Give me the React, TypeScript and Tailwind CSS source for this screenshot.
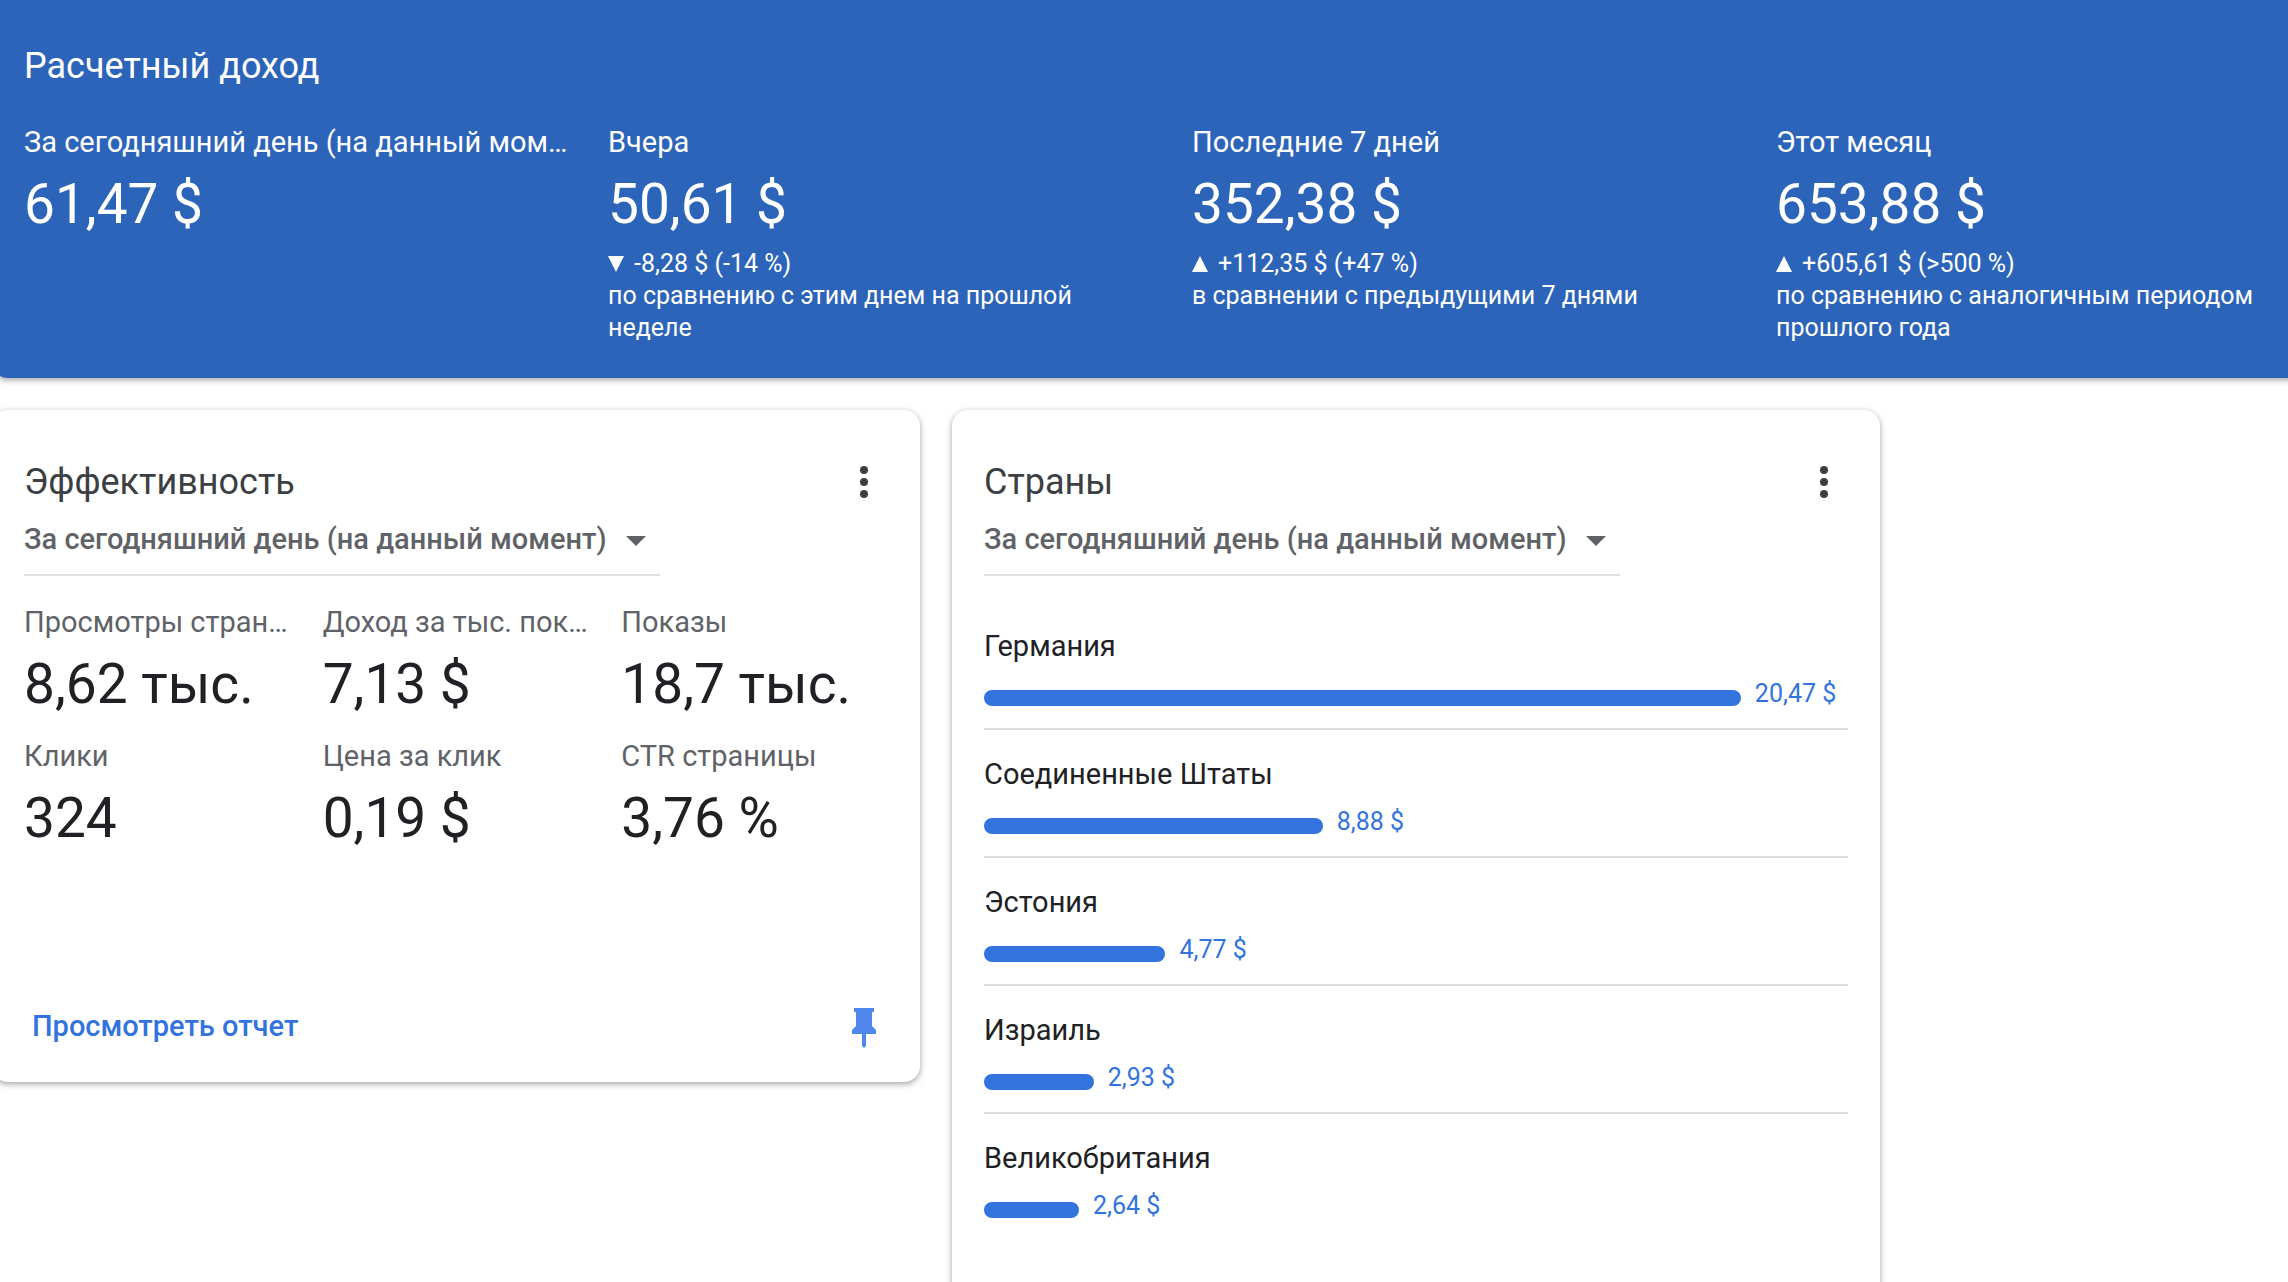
import { ReactNode } from "react";
import clsx from "clsx";

const income = [
  { label: "За сегодняшний день (на данный момент)", value: "61,47 $" },
  {
    label: "Вчера",
    value: "50,61 $",
    trend: "down",
    change: "-8,28 $ (-14 %)",
    note: "по сравнению с этим днем на прошлой неделе",
  },
  {
    label: "Последние 7 дней",
    value: "352,38 $",
    trend: "up",
    change: "+112,35 $ (+47 %)",
    note: "в сравнении с предыдущими 7 днями",
  },
  {
    label: "Этот месяц",
    value: "653,88 $",
    trend: "up",
    change: "+605,61 $ (>500 %)",
    note: "по сравнению с аналогичным периодом прошлого года",
  },
];

const metrics = [
  { label: "Просмотры страниц", value: "8,62 тыс." },
  { label: "Доход за тыс. показов", value: "7,13 $" },
  { label: "Показы", value: "18,7 тыс." },
  { label: "Клики", value: "324" },
  { label: "Цена за клик", value: "0,19 $" },
  { label: "CTR страницы", value: "3,76 %" },
];

// share is the bar width in percent of the row
const countries = [
  { name: "Германия", value: "20,47 $", share: 87.6 },
  { name: "Соединенные Штаты", value: "8,88 $", share: 39.2 },
  { name: "Эстония", value: "4,77 $", share: 21 },
  { name: "Израиль", value: "2,93 $", share: 12.7 },
  { name: "Великобритания", value: "2,64 $", share: 11 },
];

const shadow =
  "shadow-[0_2px_4px_0_rgba(60,64,67,0.3),0_2px_6px_2px_rgba(60,64,67,0.15)]";

const Trend = ({ up }: { up: boolean }) => (
  <svg viewBox="0 0 16 16" className="mr-2.5 inline-block h-4 w-4 align-baseline" fill="currentColor">
    <path d={up ? "M8 0L16 16H0Z" : "M0 0H16L8 16Z"} />
  </svg>
);

const MoreIcon = () => (
  <svg viewBox="0 0 24 24" className="h-12 w-12" fill="currentColor">
    <circle cx="12" cy="6" r="2" />
    <circle cx="12" cy="12" r="2" />
    <circle cx="12" cy="18" r="2" />
  </svg>
);

const PinIcon = () => (
  <svg viewBox="0 0 24 40" className="h-10 w-6" fill="currentColor">
    <path d="M2 0H22V4H20V18L24 22V26H14V38L12 40L10 38V26H0V22L4 18V4H2Z" />
  </svg>
);

const PeriodSelect = ({ id }: { id: string }) => (
  <div className="relative w-[636px] max-w-full text-[#5f6368]">
    <select
      id={id}
      aria-label="Период"
      className="block h-[70px] w-full appearance-none border-b-2 border-[#e0e0e0] bg-transparent text-[29px] font-medium outline-none"
    >
      <option>За сегодняшний день (на данный момент)</option>
    </select>
    <svg
      viewBox="0 0 20 10"
      className="pointer-events-none absolute top-[30px] right-3.5 h-2.5 w-5"
      fill="currentColor"
    >
      <path d="M0 0H20L10 10Z" />
    </svg>
  </div>
);

const Card = ({ id, title, children }: { id: string; title: string; children: ReactNode }) => (
  <section className={clsx("w-[928px] rounded-2xl bg-white px-8 pt-12", shadow)}>
    <div className="flex items-center justify-between text-[#3c4043]">
      <h2 className="text-4xl leading-12">{title}</h2>
      <button type="button" aria-label="Меню">
        <MoreIcon />
      </button>
    </div>
    <PeriodSelect id={id} />
    {children}
  </section>
);

const App = () => {
  return (
    <main className="h-screen overflow-hidden bg-white font-[Roboto,sans-serif] text-[#202124]">
      <header
        className={clsx(
          "-mr-18 -ml-2 rounded-b-2xl bg-[#2c64b9] px-8 pt-[42px] pb-[34px] text-white",
          shadow
        )}
      >
        <h1 className="text-4xl leading-12">Расчетный доход</h1>
        <div className="mt-8 grid grid-cols-4 gap-x-8">
          {income.map((item) => (
            <div key={item.label} className="min-w-0">
              <p className="truncate text-[29px] leading-10">{item.label}</p>
              <p className="mt-2.5 text-[55px] leading-16">{item.value}</p>
              {item.note && (
                <p className="mt-3 pr-6 text-[25px] leading-8">
                  <Trend up={item.trend === "up"} />
                  {item.change}
                  <br />
                  {item.note}
                </p>
              )}
            </div>
          ))}
        </div>
      </header>

      <div className="mt-8 -ml-2 flex items-start gap-8">
        <Card id="performance-period" title="Эффективность">
          <div className="mt-[26px] grid grid-cols-3 gap-x-8 gap-y-5">
            {metrics.map((m) => (
              <div key={m.label} className="min-w-0">
                <p className="truncate text-[29px] leading-10 text-[#5f6368]">{m.label}</p>
                <p className="mt-2.5 text-[55px] leading-16 whitespace-nowrap">{m.value}</p>
              </div>
            ))}
          </div>
          <div className="mt-36 flex items-center justify-between pr-3 pb-5">
            <a href="#report" className="px-2 pb-1 text-[29px] leading-10 font-medium text-[#3373de]">
              Просмотреть отчет
            </a>
            <button type="button" aria-label="Закрепить" className="py-3.5 text-[#5186ec]">
              <PinIcon />
            </button>
          </div>
        </Card>

        <Card id="countries-period" title="Страны">
          <ul className="mt-[26px] divide-y-2 divide-[#dadce0] pb-24">
            {countries.map((c) => (
              <li key={c.name} className="pt-6 pb-[18px]">
                <p className="text-[29px] leading-10">{c.name}</p>
                <div className="mt-3 flex items-end gap-3.5">
                  <div className="mb-1 h-4 rounded-full bg-[#3373de]" style={{ width: `${c.share}%` }} />
                  <span className="text-[25px] leading-8 whitespace-nowrap text-[#3373de]">{c.value}</span>
                </div>
              </li>
            ))}
          </ul>
        </Card>
      </div>
    </main>
  );
};

export default App;
